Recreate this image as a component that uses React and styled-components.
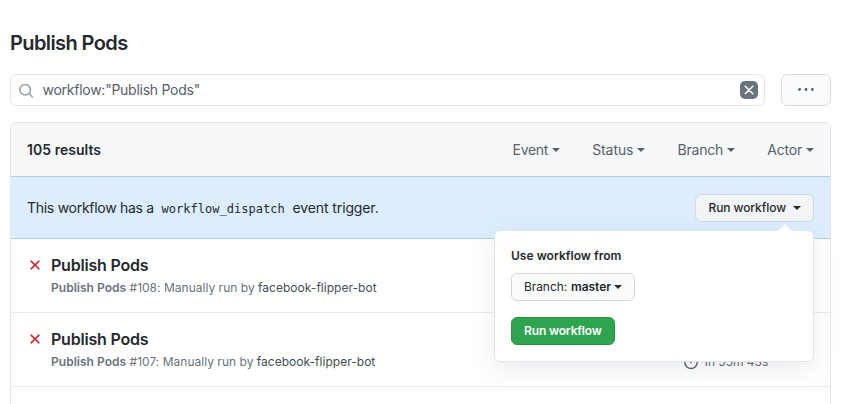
import React from "react";
import styled, { createGlobalStyle } from "styled-components";

const GlobalStyle = createGlobalStyle`
  * { box-sizing: border-box; }
  body {
    margin: 0;
    background: #fff;
    color: #24292e;
    font: 14px/20px Inter, "Liberation Sans", sans-serif;
    overflow: hidden;
  }
`;

const Page = styled.main`
  display: flex;
  flex-direction: column;
  height: 404px;
  padding: 28px 15px 0 10px;
  overflow: hidden;
`;

const Title = styled.h1`
  margin: 0 0 16px;
  font-size: 20px;
  line-height: 30px;
  font-weight: 600;
  letter-spacing: -0.6px;
`;

const SearchBar = styled.div`
  display: flex;
  flex: none;
  gap: 16px;
  margin-bottom: 16px;
`;

const SearchField = styled.div`
  display: flex;
  flex: 1;
  align-items: center;
  height: 32px;
  padding: 0 6px 0 7px;
  border: 1px solid #e1e4e8;
  border-radius: 6px;
  color: #586069;
  svg { flex: none; }
`;

const Query = styled.span`
  flex: 1;
  margin-left: 8.5px;
  letter-spacing: -0.26px;
`;

const MoreButton = styled.button`
  display: flex;
  align-items: center;
  justify-content: center;
  width: 50px;
  height: 32px;
  padding: 0;
  color: #586069;
  background: #fafbfc;
  border: 1px solid #d9dbdd;
  border-radius: 6px;
`;

const Results = styled.section`
  flex: none;
  height: 320px;
  border: 1px solid #e1e4e8;
  border-radius: 6px 6px 0 0;
`;

const ResultsHeader = styled.header`
  display: flex;
  align-items: center;
  justify-content: space-between;
  height: 53px;
  padding: 0 16px;
  background: #f6f8fa;
  border-radius: 5px 5px 0 0;
`;

const Count = styled.strong`
  font-weight: 600;
  letter-spacing: 0.04px;
`;

const Filters = styled.nav`
  display: flex;
  gap: 32px;
`;

const Filter = styled.span`
  display: flex;
  align-items: center;
  gap: 4px;
  color: #586069;
  letter-spacing: ${(p) => p.$spacing};
`;

const Caret = styled.i`
  width: 0;
  height: 0;
  margin-left: ${(p) => p.$gap || "0"};
  border: 4px solid transparent;
  border-top-color: currentColor;
  border-bottom: 0;
`;

const Dispatch = styled.div`
  display: flex;
  align-items: center;
  justify-content: space-between;
  height: 63px;
  padding: 0 16px;
  background: #dbedff;
  border: solid #b0cfee;
  border-width: 1px 0;
`;

const Code = styled.code`
  margin: 0 4px;
  font: 12px "DejaVu Sans Mono", "Liberation Mono", monospace;
  letter-spacing: 0.02px;
`;

const DispatchText = styled.span`
  letter-spacing: -0.12px;
`;

const DispatchLead = styled.span`
  letter-spacing: -0.28px;
`;

const MenuAnchor = styled.div`
  position: relative;
`;

const Button = styled.button`
  display: flex;
  align-items: center;
  height: 28px;
  padding: 0 12px;
  font: 12px/20px Inter, "Liberation Sans", sans-serif;
  font-weight: ${(p) => (p.$strong ? 600 : 500)};
  letter-spacing: ${(p) => p.$spacing || "0"};
  white-space: nowrap;
  color: ${(p) => (p.$primary ? "#fff" : "#24292e")};
  background: ${(p) => (p.$primary ? "#2ea44f" : p.$active ? "#f3f4f6" : "#fafbfc")};
  border: 1px solid ${(p) => (p.$primary ? "#2a9147" : "#d5d8da")};
  border-radius: 6px;
`;

const Light = styled.span`
  margin-right: 4px;
  font-weight: 400;
`;

const Popover = styled.div`
  position: absolute;
  z-index: 2;
  top: 36px;
  right: 0;
  display: flex;
  flex-direction: column;
  align-items: flex-start;
  width: 320px;
  height: 132px;
  padding: 15px 16px;
  background: #fff;
  border: 1px solid #e1e4e8;
  border-radius: 6px;
  box-shadow: 0 8px 24px rgba(149, 157, 165, 0.2);
  &::before {
    content: "";
    position: absolute;
    top: -7px;
    right: 21px;
    border: 7px solid transparent;
    border-top: 0;
    border-bottom-color: #fff;
  }
`;

const PopoverTitle = styled.strong`
  margin-bottom: 7px;
  font-size: 12px;
  font-weight: 600;
  letter-spacing: 0.03px;
`;

const Spacer = styled.div`
  height: 16px;
`;

const Run = styled.article`
  display: flex;
  height: 74px;
  padding: 14px 16px 0;
  border-bottom: 1px solid #e7eaed;
`;

const FailMark = styled.svg`
  flex: none;
  width: 16px;
  height: 16px;
  margin-top: 4px;
  fill: #cb2431;
  stroke: #cb2431;
  stroke-width: 0.25px;
`;

const RunBody = styled.div`
  flex: 1;
  margin-left: 8px;
`;

const RunTitle = styled.h2`
  margin: 0;
  font-size: 16px;
  line-height: 24px;
  font-weight: 600;
  letter-spacing: -0.2px;
`;

const RunMeta = styled.p`
  margin: 1px 0 0;
  font-size: 12px;
  line-height: 20px;
  color: #6a737d;
  letter-spacing: 0.02px;
  b { font-weight: 600; }
  a { color: #444d56; }
`;

const Duration = styled.div`
  display: flex;
  align-items: center;
  gap: 4px;
  width: 131px;
  height: 20px;
  margin-top: 25px;
  font-size: 12px;
  color: #586069;
`;

const xPath =
  "M3.72 3.72a.75.75 0 0 1 1.06 0L8 6.94l3.22-3.22a.75.75 0 1 1 1.06 1.06L9.06 8l3.22 3.22a.75.75 0 1 1-1.06 1.06L8 9.06l-3.22 3.22a.75.75 0 0 1-1.06-1.06L6.94 8 3.72 4.78a.75.75 0 0 1 0-1.06z";

const filters = [
  { name: "Event", spacing: "-0.3px" },
  { name: "Status", spacing: "-0.08px" },
  { name: "Branch", spacing: "-0.17px" },
  { name: "Actor", spacing: "-0.2px" },
];

const runs = [
  { number: 108, duration: "1h 54m 12s" },
  { number: 107, duration: "1h 55m 43s" },
];

export default function App() {
  return (
    <>
      <GlobalStyle />
      <Page>
        <Title>Publish Pods</Title>
        <SearchBar>
          <SearchField>
            <svg width="16" height="16" viewBox="0 0 16 16" fill="none" stroke="#959da5" strokeWidth="1.5" strokeLinecap="round">
              <circle cx="7.2" cy="7.8" r="5.3" />
              <path d="M11.1 11.7l3.3 3.3" />
            </svg>
            <Query>workflow:"Publish Pods"</Query>
            <svg width="18" height="18" viewBox="0 0 18 18">
              <rect width="18" height="18" rx="5" fill="#6a737d" />
              <path d="M5.2 5.2l7.6 7.6m0-7.6l-7.6 7.6" stroke="#fff" strokeWidth="1.5" strokeLinecap="round" />
            </svg>
          </SearchField>
          <MoreButton aria-label="More options">
            <svg width="16" height="16" viewBox="0 0 16 16" fill="currentColor">
              <circle cx="1.6" cy="7.5" r="1.4" />
              <circle cx="8" cy="7.5" r="1.4" />
              <circle cx="14.4" cy="7.5" r="1.4" />
            </svg>
          </MoreButton>
        </SearchBar>
        <Results>
          <ResultsHeader>
            <Count>105 results</Count>
            <Filters>
              {filters.map(({ name, spacing }) => (
                <Filter key={name} $spacing={spacing}>{name}<Caret /></Filter>
              ))}
            </Filters>
          </ResultsHeader>
          <Dispatch>
            <DispatchText>
              <DispatchLead>This workflow has a </DispatchLead>
              <Code>workflow_dispatch</Code> event trigger.
            </DispatchText>
            <MenuAnchor>
              <Button $active $spacing="-0.08px">Run workflow<Caret $gap="7px" /></Button>
              <Popover>
                <PopoverTitle>Use workflow from</PopoverTitle>
                <Button $strong $spacing="-0.08px"><Light>Branch:</Light>master<Caret $gap="3px" /></Button>
                <Spacer />
                <Button $primary $strong $spacing="-0.15px">Run workflow</Button>
              </Popover>
            </MenuAnchor>
          </Dispatch>
          {runs.map((run) => (
            <Run key={run.number}>
              <FailMark viewBox="0 0 16 16"><path d={xPath} /></FailMark>
              <RunBody>
                <RunTitle>Publish Pods</RunTitle>
                <RunMeta><b>Publish Pods</b> #{run.number}: Manually run by <a>facebook-flipper-bot</a></RunMeta>
              </RunBody>
              <Duration>
                <svg width="16" height="16" viewBox="0 0 16 16" fill="none" stroke="currentColor" strokeWidth="1.5" strokeLinecap="round">
                  <circle cx="8" cy="8.3" r="6.2" />
                  <path d="M6 .8h4M8 1v1.2M8 5.5v3.2M13 3l1 1" />
                </svg>
                {run.duration}
              </Duration>
            </Run>
          ))}
        </Results>
      </Page>
    </>
  );
}
